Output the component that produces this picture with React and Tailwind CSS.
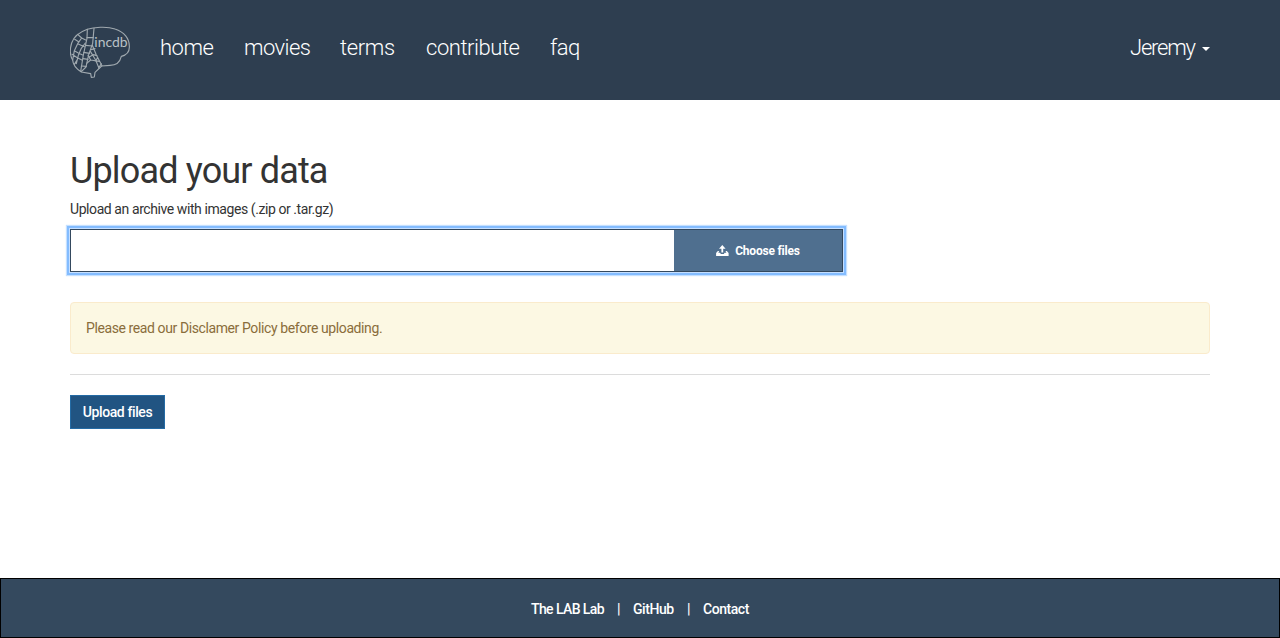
import React from 'react';

const navItems = [
  { label: 'home', className: 'w-[54px] tracking-[-0.5px]' },
  { label: 'movies', className: 'w-[66px] tracking-[-0.55px]' },
  { label: 'terms', className: 'w-[56px] tracking-[-0.35px]' },
  { label: 'contribute', className: 'w-[94px] tracking-[-0.45px]' },
  { label: 'faq', className: 'w-[30px] tracking-[-0.5px]' },
];

function BrainLogo() {
  return (
    <svg viewBox="30 24 180 156" className="h-[52px] w-[60px] shrink-0" fill="none" stroke="#a0a9af" strokeWidth="3.4" strokeLinejoin="round" strokeLinecap="round">
      <path d="M82 34 C100 28 140 24 165 33 C193 42 208 62 208 84 C209 100 200 111 184 115 C180 132 168 142 150 142 L125 144 L105 163 L103 177 L94 178 L92 167 L64 162 C53 155 39 145 38 126 C31 115 29 95 35 75 C41 56 60 42 82 34Z" />
      <path d="M82 34 L81 61 L70 111 L62 160 M102 31 L98 76 L86 110 L78 147 L64 161" />
      <path d="M81 59 L100 59 M77 82 L97 84 M71 103 L89 106 M69 122 L84 124 M64 144 L79 145" />
      <path d="M53 49 L65 60 L53 77 L43 98 L38 126 M65 60 L77 66 M53 77 L73 86 M76 75 L64 91 L55 112 L49 137 M43 98 L55 105 L68 111 M36 109 L52 119 L67 127 M43 139 L52 125 M44 64 L57 72" />
      <path d="M97 82 L109 111 L126 143 M91 100 L107 126 L117 151 M93 95 L105 92 M87 118 L99 110 L111 113 M80 136 L92 126 L118 130 M92 126 L84 112 M107 130 L113 118 M116 150 L124 137" />
      <text x="103" y="86" textLength="100" lengthAdjust="spacingAndGlyphs" fill="#b9c1c6" stroke="none" fontFamily="Lato, sans-serif" fontSize="41">incdb</text>
    </svg>
  );
}

function UploadIcon() {
  return (
    <svg viewBox="0 0 13 12" className="h-3 w-[13px]" fill="white">
      <path d="M6.3 0 L9.6 3.7 H7.2 V7.4 H5.4 V3.7 H3Z" />
      <path d="M1.9 6 H3.2 L2.3 7.8 H4.2 L4.8 9 H7.9 L8.5 7.8 H10.4 L9.5 6 H10.8 L12.6 8 V11 H0.1 V8Z" />
    </svg>
  );
}

export default function App() {
  return (
    <div className="flex h-[638px] w-[1280px] flex-col bg-white font-[Roboto,sans-serif] text-[#333]">
      <header className="h-[100px] shrink-0 bg-[#2e3e50] px-[70px]">
        <div className="flex h-full items-start pt-[26px]">
          <BrainLogo />
          <nav className="mt-[5px] ml-[30px] flex gap-[30px] text-[22px] leading-[34px] font-light text-white">
            {navItems.map((item) => (
              <a key={item.label} href="#" className={item.className + ' whitespace-nowrap'}>{item.label}</a>
            ))}
          </nav>
          <button className="mt-[5px] ml-auto flex items-center text-[22px] leading-[34px] font-light text-white">
            <span className="w-[65px] text-left tracking-[-1.2px] whitespace-nowrap">Jeremy</span>
            <span className="mt-[2px] ml-[7px] border-x-4 border-t-4 border-x-transparent border-t-white" />
          </button>
        </div>
      </header>

      <main className="flex-1 px-[70px] pt-[51px]">
        <h1 className="h-10 text-[36px] leading-10 tracking-[-0.85px] whitespace-nowrap">Upload your data</h1>
        <p className="mt-2 text-[14px] leading-5 tracking-[-0.42px] whitespace-nowrap">Upload an archive with images (.zip or .tar.gz)</p>
        <div className="mt-[10px] flex h-[43px] w-[773px] border border-[#34495e] shadow-[0_0_0_1px_#c5dfff,0_0_0_3px_#83bcff,0_0_1px_4px_#c5e0ff]">
          <div className="flex-1 bg-white" />
          <button className="flex w-[168px] items-center justify-center gap-[6px] bg-[#4f6f8f] text-[12px] font-bold text-white">
            <UploadIcon />
            <span className="tracking-[-0.2px] whitespace-nowrap">Choose files</span>
          </button>
        </div>
        <div className="mt-[30px] flex h-[52px] items-center rounded border border-[#faebcc] bg-[#fcf8e3] px-[15px] text-[14px] text-[#8a6d3b]">
          <span className="tracking-[-0.4px] whitespace-nowrap">Please read our Disclamer Policy before uploading.</span>
        </div>
        <hr className="mt-5 border-[#dcdcdc]" />
        <button className="mt-5 flex h-[34px] w-[95px] items-center justify-center border border-[#246ba5] bg-[#215482] text-[14px] font-medium text-white">
          <span className="tracking-[-0.4px] whitespace-nowrap">Upload files</span>
        </button>
      </main>

      <footer className="flex h-[60px] shrink-0 items-center border border-black bg-[#34495e] pt-[2px] pl-[530px] text-[14px] leading-5 font-medium whitespace-nowrap text-white">
        <a href="#" className="w-[86px] tracking-[-0.6px]">The LAB Lab</a>
        <span className="w-4">|</span>
        <a href="#" className="w-[54px] tracking-[-0.45px]">GitHub</a>
        <span className="w-4">|</span>
        <a href="#" className="tracking-[-0.45px]">Contact</a>
      </footer>
    </div>
  );
}
